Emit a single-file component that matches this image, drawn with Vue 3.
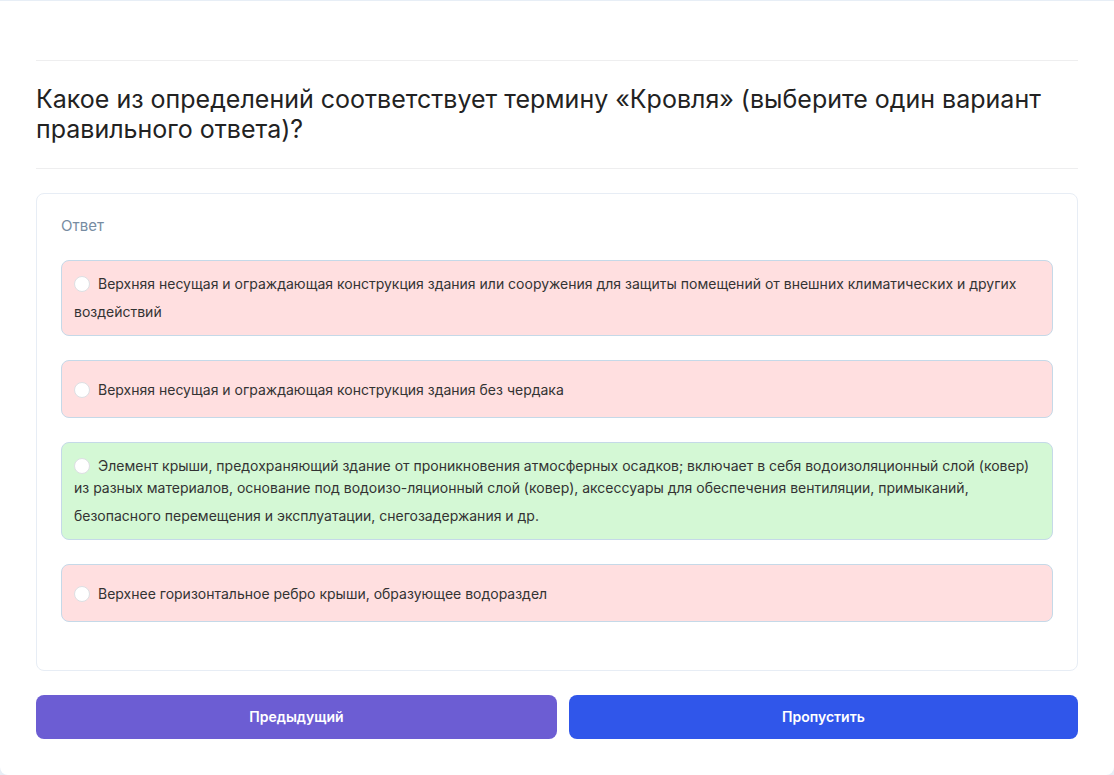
<script setup>
import { ref } from 'vue'

const selected = ref(null)
const answers = [
  { id: 1, correct: false, lead: 'Верхняя несущая и ограждающая конструкция здания или сооружения для защиты помещений от внешних климатических и других ', tail: 'воздействий' },
  { id: 2, correct: false, lead: '', tail: 'Верхняя несущая и ограждающая конструкция здания без чердака' },
  { id: 3, correct: true, lead: 'Элемент крыши, предохраняющий здание от проникновения атмосферных осадков; включает в себя водоизоляционный слой (ковер) из разных материалов, основание под водоизо-ляционный слой (ковер), аксессуары для обеспечения вентиляции, примыканий, ', tail: 'безопасного перемещения и эксплуатации, снегозадержания и др.' },
  { id: 4, correct: false, lead: '', tail: 'Верхнее горизонтальное ребро крыши, образующее водораздел' },
]
</script>

<template>
  <main class="page">
    <header class="question">
      <h1>Какое из определений соответствует термину «Кровля» (выберите один вариант правильного ответа)?</h1>
    </header>
    <form @submit.prevent>
      <fieldset class="card">
        <div id="caption" class="caption">Ответ</div>
        <div class="answers" role="radiogroup" aria-labelledby="caption">
          <label v-for="a in answers" :key="a.id" class="answer" :class="{ correct: a.correct, single: !a.lead }">
            <input v-model="selected" type="radio" name="answer" :value="a.id" />{{ a.lead }}<span class="tail">{{ a.tail }}</span>
          </label>
        </div>
      </fieldset>
      <div class="actions">
        <button type="button" class="prev">Предыдущий</button>
        <button type="button" class="skip">Пропустить</button>
      </div>
    </form>
  </main>
</template>

<style>
body {
  background: #e7eef6;
}
</style>

<style scoped>
.page {
  box-sizing: border-box;
  padding: 59px 36px 36px;
  border-top: 1px solid #e7eef6;
  border-radius: 0 0 8px 8px;
  background: #fff;
  font-family: Inter, "Liberation Sans", sans-serif;
  color: #212529;
}
.question {
  padding: 23px 0 24px;
  border-top: 1px solid #eeeeef;
  border-bottom: 1px solid #eeeeef;
}
h1 {
  margin: 0;
  font-size: 25px;
  line-height: 30px;
  font-weight: 400;
  color: #222;
}
.card {
  margin: 24px 0 0;
  padding: 24px 24px 48px;
  min-width: 0;
  border: 1px solid #e7edf5;
  border-radius: 8px;
}
.caption {
  margin-bottom: 26px;
  font-size: 15px;
  line-height: 16px;
  color: #778ca2;
}
.answers {
  display: flex;
  flex-direction: column;
  gap: 24px;
}
.answer {
  display: block;
  padding: 12px 12px 6px;
  border: 1px solid #c5d9e8;
  border-radius: 8px;
  background: #ffdfe0;
  font-size: 14px;
  line-height: 22px;
  color: #333;
}
.answer.correct {
  background: #d4f8d5;
}
.answer.single {
  padding-bottom: 10px;
}
.tail {
  line-height: 34px;
}
.answer input {
  appearance: none;
  box-sizing: border-box;
  width: 16px;
  height: 16px;
  margin: 0 8px 0 0;
  vertical-align: -3px;
  border: 1px solid #dddfe3;
  border-radius: 50%;
  background: #fff;
}
.answer input:checked {
  border: 5px solid #3056ed;
}
.actions {
  display: flex;
  gap: 12px;
  margin-top: 24px;
}
button {
  height: 44px;
  border: 0;
  border-radius: 8px;
  font: 600 14px/20px Inter, "Liberation Sans", sans-serif;
  color: #fff;
  cursor: pointer;
}
.prev {
  flex: 521;
  background: #6c5dd3;
}
.skip {
  flex: 509;
  background: #3056ea;
}
</style>
